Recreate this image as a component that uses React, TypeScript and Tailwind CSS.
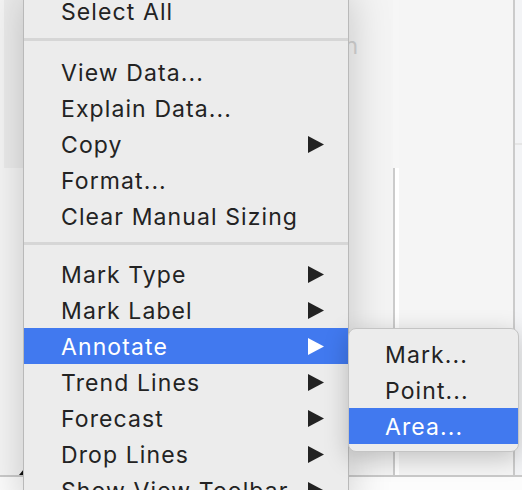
import React from "react";

type Item = { label: string; sub?: boolean; active?: boolean };

const group1: Item[] = [{ label: "Select All" }];
const group2: Item[] = [
  { label: "View Data..." },
  { label: "Explain Data..." },
  { label: "Copy", sub: true },
  { label: "Format..." },
  { label: "Clear Manual Sizing" },
];
const group3: Item[] = [
  { label: "Mark Type", sub: true },
  { label: "Mark Label", sub: true },
  { label: "Annotate", sub: true, active: true },
  { label: "Trend Lines", sub: true },
  { label: "Forecast", sub: true },
  { label: "Drop Lines", sub: true },
  { label: "Show View Toolbar", sub: true },
];

function Arrow({ white }: { white?: boolean }) {
  return (
    <svg width="16" height="17" viewBox="0 0 16 17" className="shrink-0">
      <polygon points="0,0 16,8.5 0,17" fill={white ? "#ffffff" : "#222222"} />
    </svg>
  );
}

function Row({ item }: { item: Item }) {
  return (
    <div
      className={
        "flex h-[36px] items-center justify-between pl-[37px] pr-[24px] " +
        (item.active ? "bg-[#4179ef] text-white" : "text-[#232323]")
      }
    >
      <span className="whitespace-nowrap pt-[2px]">{item.label}</span>
      {item.sub ? <Arrow white={item.active} /> : null}
    </div>
  );
}

export default function App() {
  return (
    <div
      className="relative h-[490px] w-[522px] overflow-hidden bg-[#f4f4f4]"
      style={{ fontFamily: "Inter, 'Noto Sans', sans-serif" }}
    >
      {/* background application */}
      <div className="flex h-full w-full flex-col">
        <div className="flex h-[475px] w-full">
          <div className="flex w-[24px] flex-col bg-[#f5f5f5]">
            <div className="ml-[4px] h-[168px] bg-[#ececec]" />
          </div>
          <div className="relative w-[369px]">
            <span className="absolute right-[35px] top-[29px] text-[23px] text-[#d2d2d2]">
              Column
            </span>
          </div>
          <div className="flex w-[6px] flex-col">
            <div className="h-[168px] bg-[#f6f6f6]" />
            <div className="flex flex-1">
              <div className="w-[2px] bg-[#cbcbcb]" />
              <div className="w-[4px] bg-white" />
            </div>
          </div>
          <div className="w-[114px] bg-[#f5f5f5]" />
          <div className="w-[2px] bg-[#cbcbcb]" />
          <div className="flex flex-1 flex-col bg-[#f3f4f6]">
            <div className="h-[143px]" />
            <div className="h-[2px] bg-[#e6e6e6]" />
          </div>
        </div>
        <div className="h-[2px] bg-[#cacaca]" />
        <div className="flex-1 bg-[#fcfcfc]" />
      </div>

      {/* corner triangle */}
      <svg
        className="absolute left-[19px] top-[469px]"
        width="5"
        height="6"
        viewBox="0 0 5 6"
      >
        <polygon points="5,0 5,6 0,6" fill="#111" />
      </svg>

      {/* main context menu */}
      <div className="absolute left-[23px] top-[-7px] w-[326px] border-x border-[#b9b9b9] bg-[#ececec] text-[23px] leading-none tracking-[1.1px] shadow-[0_0_40px_rgba(0,0,0,0.2)]">
        {group1.map((i) => (
          <Row key={i.label} item={i} />
        ))}
        <div className="pb-[13px] pt-[9px]">
          <div className="h-[3px] bg-[#d6d6d6]" />
        </div>
        {group2.map((i) => (
          <Row key={i.label} item={i} />
        ))}
        <div className="pb-[11px] pt-[8px]">
          <div className="h-[3px] bg-[#d6d6d6]" />
        </div>
        {group3.map((i) => (
          <Row key={i.label} item={i} />
        ))}
      </div>

      {/* submenu */}
      <div className="absolute left-[348px] top-[328px] w-[171px] overflow-hidden rounded-[8px] border border-[#c4c4c4] bg-[#ececec] py-[7px] text-[23px] leading-none tracking-[1.1px] shadow-[0_6px_24px_rgba(0,0,0,0.22)]">
        {["Mark...", "Point...", "Area..."].map((l, idx) => (
          <div
            key={l}
            className={
              "flex h-[36px] items-center pl-[36px] pt-[2px] " +
              (idx === 2 ? "bg-[#4179ef] text-white" : "text-[#232323]")
            }
          >
            {l}
          </div>
        ))}
      </div>
    </div>
  );
}
